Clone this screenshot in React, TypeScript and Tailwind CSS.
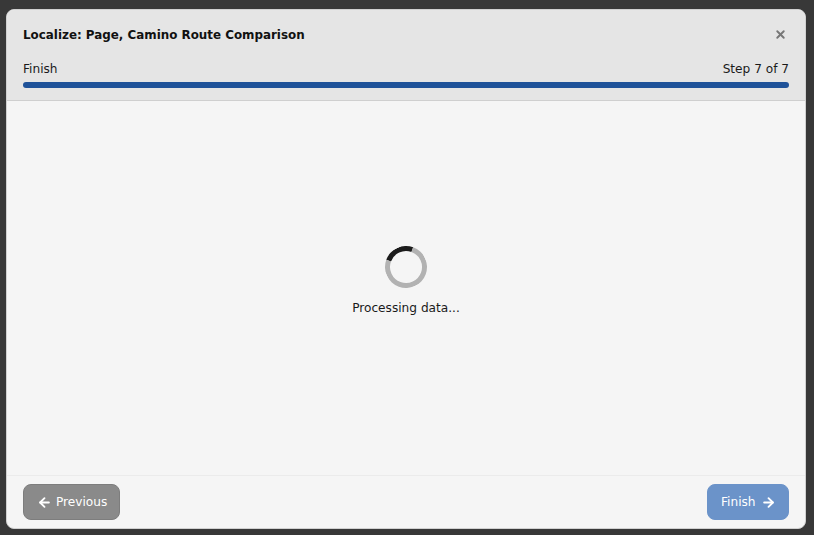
import { ArrowLeft, ArrowRight, X } from 'lucide-react';

export default function App() {
  return (
    <div className="w-[814px] h-[535px] overflow-hidden bg-[#383838] pt-[9px] pl-[6px] font-['DejaVu_Sans',sans-serif] text-[12.15px] text-[#1a1a1a]">
      <div className="w-[800px] h-[520px] flex flex-col rounded-[8px] overflow-hidden bg-[#f5f5f5] border border-[#d0d0d0]">
        {/* Header */}
        <div className="h-[91px] shrink-0 bg-[#e5e5e5] border-b border-[#cfcfcf] px-4 flex flex-col">
          <div className="h-[30px] mt-[10px] flex items-center justify-between">
            <span className="mt-px font-bold text-[11.9px] text-[#111]">Localize: Page, Camino Route Comparison</span>
            <X size={13} strokeWidth={3.5} className="text-[#777] mr-[2px] -mt-px" />
          </div>
          <div className="mt-[11px] flex justify-between leading-[16px]">
            <span>Finish</span>
            <span>Step 7 of 7</span>
          </div>
          <div className="mt-[5px] h-[6px] rounded-full bg-[#1f5299]" />
        </div>

        {/* Body */}
        <div className="flex-1 flex flex-col items-center justify-center pb-[15px]">
          <div className="w-[42px] h-[42px] rounded-full border-[5px] border-[#b2b2b2] border-t-[#1c1c1c] -rotate-[25deg]" />
          <div className="mt-[12px] leading-[16px]">Processing data...</div>
        </div>

        {/* Footer */}
        <div className="h-[53px] shrink-0 border-t border-[#ebebeb] px-4 flex items-center justify-between">
          <button className="h-[36px] w-[97px] pl-[13px] flex items-center gap-[4px] rounded-[8px] bg-[#8a8a8a] border border-[#7d7d7d] text-white">
            <ArrowLeft size={15} strokeWidth={3} />
            Previous
          </button>
          <button className="h-[36px] w-[82px] pl-[13px] flex items-center gap-[5px] rounded-[8px] bg-[#6b93c9] border border-[#6b93c9] text-white">
            Finish
            <ArrowRight size={15} strokeWidth={3} />
          </button>
        </div>
      </div>
    </div>
  );
}
